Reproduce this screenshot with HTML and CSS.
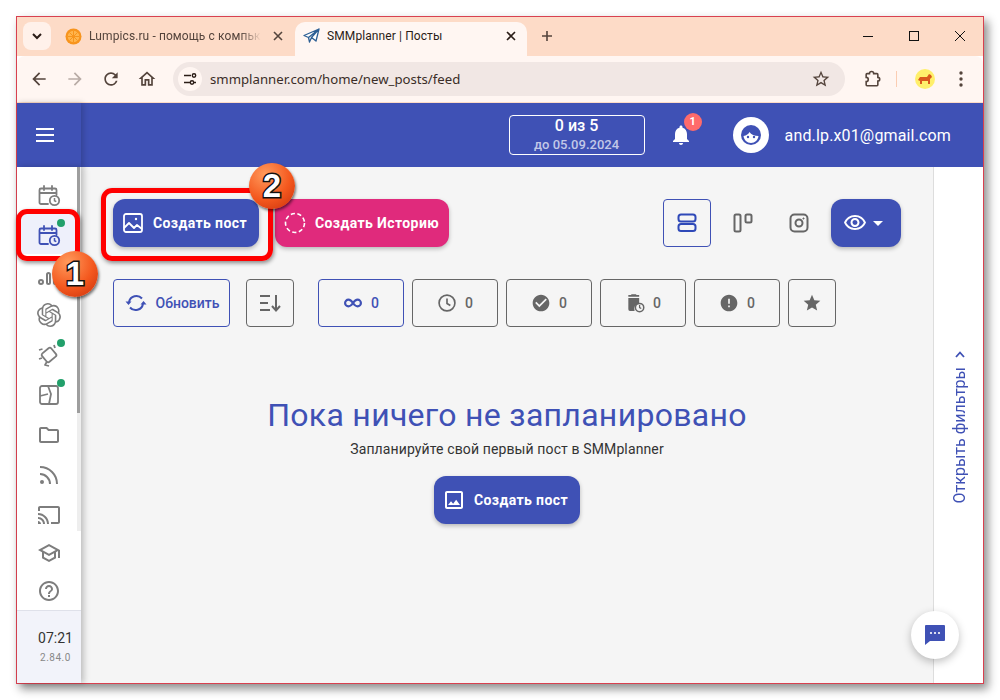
FILE: index.html
```html
<!DOCTYPE html>
<html lang="en">
<head>
    <meta charset="UTF-8">
    <title>SMMplanner | Посты</title>
    <link rel="stylesheet" href="styles.css">
</head>
<body>
<svg class="defs" width="0" height="0">
    <symbol id="cal-clock" viewBox="0 0 24 24">
        <path d="M4 5.5h14a1.5 1.5 0 0 1 1.5 1.5v5M11 21H4a1.5 1.5 0 0 1-1.5-1.5V7A1.5 1.5 0 0 1 4 5.500M2.500 10h17M7 3v4M15 3v4" fill="none" stroke="currentColor" stroke-width="1.8" stroke-linecap="round"/>
        <circle cx="17.500" cy="17.500" r="4.700" fill="none" stroke="currentColor" stroke-width="1.800"/>
        <path d="M17.500 15v2.700l1.800 1" fill="none" stroke="currentColor" stroke-width="1.500"/>
    </symbol>
    <symbol id="picture" viewBox="0 0 24 24">
        <path d="M19 5v14H5V5h14m0-2H5c-1.100 0-2 .9-2 2v14c0 1.100.9 2 2 2h14c1.100 0 2-.9 2-2V5c0-1.100-.9-2-2-2zm-4.860 8.860l-3 3.870L9 13.140 6 17h12l-3.860-5.140z"/>
    </symbol>
</svg>

<div class="window">
    <!-- browser chrome -->
    <div class="tabstrip">
        <button class="tab-search">
            <svg width="12" height="12" viewBox="0 0 12 12"><path d="M2 4l4 4 4-4" fill="none" stroke="#2b1d17" stroke-width="2"/></svg>
        </button>
        <div class="tab tab-idle">
            <svg class="favicon" width="17" height="17" viewBox="0 0 17 17">
                <circle cx="8.500" cy="8.500" r="8" fill="#f7941d"/>
                <circle cx="8.500" cy="8.500" r="5.800" fill="#ffb54d"/>
                <path d="M8.500 2.700v11.600M2.700 8.500h11.600M4.400 4.400l8.200 8.200M12.600 4.400l-8.200 8.200" stroke="#f7941d" stroke-width="1"/>
            </svg>
            <span class="tab-title fade">Lumpics.ru - помощь с компьк</span>
            <svg class="tab-close" width="10" height="10" viewBox="0 0 10 10"><path d="M1 1l8 8M9 1l-8 8" stroke="#54443c" stroke-width="1.600"/></svg>
        </div>
        <div class="tab tab-active">
            <svg class="favicon" width="17" height="17" viewBox="0 0 17 17">
                <path d="M16 1L1 7.500l4.500 2L16 1zM16 1l-3 12-4.500-3.500L16 1zM5.500 9.500l1 4.500 2-4.500" fill="#fff" stroke="#2c5f94" stroke-width="1.300" stroke-linejoin="round"/>
            </svg>
            <span class="tab-title">SMMplanner | Посты</span>
            <svg class="tab-close" width="10" height="10" viewBox="0 0 10 10"><path d="M1 1l8 8M9 1l-8 8" stroke="#2b1d17" stroke-width="1.600"/></svg>
        </div>
        <svg class="new-tab" width="12" height="12" viewBox="0 0 12 12"><path d="M6 1v10M1 6h10" stroke="#54443c" stroke-width="1.600"/></svg>
        <div class="win-controls">
            <svg width="12" height="12" viewBox="0 0 12 12"><path d="M1 6.500h10" stroke="#111" stroke-width="1"/></svg>
            <svg width="12" height="12" viewBox="0 0 12 12"><rect x="1.500" y="1.500" width="9" height="9" fill="none" stroke="#111" stroke-width="1"/></svg>
            <svg width="12" height="12" viewBox="0 0 12 12"><path d="M1 1l10 10M11 1L1 11" stroke="#111" stroke-width="1"/></svg>
        </div>
    </div>
    <div class="toolbar">
        <svg class="nav-icon" viewBox="0 0 24 24"><path d="M20 11H7.830l5.590-5.590L12 4l-8 8 8 8 1.410-1.410L7.830 13H20v-2z"/></svg>
        <svg class="nav-icon nav-off" viewBox="0 0 24 24"><path d="M12 4l-1.410 1.410L16.170 11H4v2h12.170l-5.580 5.590L12 20l8-8z"/></svg>
        <svg class="nav-icon" viewBox="0 0 24 24"><path d="M17.650 6.350A7.958 7.958 0 0 0 12 4c-4.420 0-7.990 3.580-7.990 8s3.570 8 7.990 8c3.730 0 6.840-2.550 7.730-6h-2.080A5.990 5.990 0 0 1 12 18c-3.310 0-6-2.690-6-6s2.690-6 6-6c1.660 0 3.140.69 4.220 1.780L13 11h7V4l-2.350 2.350z"/></svg>
        <svg class="nav-icon" viewBox="0 0 24 24"><path d="M12 5.690l5 4.500V18h-2v-6H9v6H7v-7.810l5-4.500M12 3L2 12h3v8h6v-6h2v6h6v-8h3L12 3z"/></svg>
        <div class="omnibox">
            <span class="site-info">
                <svg width="14" height="14" viewBox="0 0 14 14"><path d="M1 3.500h7M1 10.500h6M11 10.500h2" stroke="#2b1d17" stroke-width="1.400" fill="none"/><circle cx="11" cy="3.500" r="1.700" fill="none" stroke="#2b1d17" stroke-width="1.400"/><circle cx="9" cy="10.500" r="1.700" fill="none" stroke="#2b1d17" stroke-width="1.400"/></svg>
            </span>
            <span class="url">smmplanner.com/home/new_posts/feed</span>
            <svg class="nav-icon star" viewBox="0 0 24 24"><path d="M22 9.240l-7.190-.62L12 2 9.190 8.630 2 9.240l5.460 4.730L5.820 21 12 17.270 18.180 21l-1.630-7.030L22 9.240zM12 15.400l-3.760 2.270 1-4.280-3.320-2.880 4.380-.38L12 6.100l1.710 4.040 4.380.38-3.320 2.880 1 4.280L12 15.400z"/></svg>
        </div>
        <svg class="nav-icon ext" viewBox="0 0 24 24"><path d="M9 5.500a2.500 2.500 0 0 1 5 0H18a1 1 0 0 1 1 1V10a2.200 2.200 0 0 1 0 4.500V19a1 1 0 0 1-1 1H6a1 1 0 0 1-1-1V15a2.500 2.500 0 0 0 0-5V6.500a1 1 0 0 1 1-1z" fill="none" stroke="#54443c" stroke-width="1.900"/></svg>
        <span class="tool-sep"></span>
        <svg class="profile" width="20" height="20" viewBox="0 0 20 20">
            <circle cx="10" cy="10" r="10" fill="#ffef6b"/>
            <path d="M3 11l2-3h7l2-3 2 1 1 2-2 2v5h-2v-3H7v3H5v-3z" fill="#d9591c"/>
        </svg>
        <svg class="dots" width="4" height="16" viewBox="0 0 4 16"><circle cx="2" cy="2" r="1.700" fill="#54443c"/><circle cx="2" cy="8" r="1.700" fill="#54443c"/><circle cx="2" cy="14" r="1.700" fill="#54443c"/></svg>
    </div>

    <!-- app -->
    <header class="topbar">
        <div class="burger"><span></span><span></span><span></span></div>
        <div class="topbar-right">
            <div class="limit">
                <div class="limit-count">0 из 5</div>
                <div class="limit-date">до 05.09.2024</div>
            </div>
            <div class="bell">
                <svg width="24" height="24" viewBox="0 0 24 24" fill="#fff"><path d="M12 22c1.100 0 2-.9 2-2h-4c0 1.100.9 2 2 2zm6-6v-5c0-3.070-1.630-5.640-4.500-6.320V4c0-.83-.67-1.500-1.500-1.500s-1.500.67-1.500 1.500v.68C7.640 5.360 6 7.920 6 11v5l-2 2v1h16v-1l-2-2z"/></svg>
                <span class="bell-badge">1</span>
            </div>
            <svg class="avatar" width="36" height="36" viewBox="0 0 36 36">
                <circle cx="18" cy="18" r="18" fill="#fff"/>
                <circle cx="18" cy="18" r="10" fill="#3f51b5"/>
                <path d="M10.500 19c3-.5 5-2 6-4 1.500 2.500 5 4 9 4-.5 4-3.500 7-7.500 7s-7-3-7.500-7z" fill="#fff"/>
                <circle cx="15" cy="20" r="1.200" fill="#3f51b5"/>
                <circle cx="21" cy="20" r="1.200" fill="#3f51b5"/>
            </svg>
            <span class="email">and.lp.x01@gmail.com</span>
        </div>
    </header>

    <div class="app-body">
        <aside class="sidebar">
            <nav class="side-scroll">
                <a class="side-item"><svg class="side-icon"><use href="#cal-clock"/></svg></a>
                <a class="side-item side-active dot"><svg class="side-icon"><use href="#cal-clock"/></svg></a>
                <a class="side-item">
                    <svg class="side-icon" viewBox="0 0 24 24" fill="none" stroke="currentColor" stroke-width="2"><circle cx="4" cy="19" r="2"/><rect x="10" y="10" width="3" height="11" rx="1.500"/><rect x="17" y="4" width="3" height="17" rx="1.500"/></svg>
                </a>
                <a class="side-item">
                    <svg class="side-icon" viewBox="0 0 24 24" fill="currentColor"><path d="M22.282 9.821a5.985 5.985 0 0 0-.516-4.911 6.046 6.046 0 0 0-6.510-2.900A6.065 6.065 0 0 0 4.981 4.182a5.985 5.985 0 0 0-3.998 2.900 6.046 6.046 0 0 0 .743 7.097 5.980 5.980 0 0 0 .511 4.911 6.051 6.051 0 0 0 6.515 2.900A5.985 5.985 0 0 0 13.260 24a6.056 6.056 0 0 0 5.772-4.206 5.989 5.989 0 0 0 3.998-2.900 6.056 6.056 0 0 0-.748-7.073zm-9.022 12.608a4.476 4.476 0 0 1-2.876-1.041l.142-.080 4.778-2.758a.795.795 0 0 0 .393-.681v-6.737l2.020 1.169a.071.071 0 0 1 .038.052v5.583a4.504 4.504 0 0 1-4.495 4.494zm-9.661-4.125a4.471 4.471 0 0 1-.535-3.014l.142.085 4.783 2.758a.771.771 0 0 0 .781 0l5.843-3.369v2.333a.080.080 0 0 1-.033.061L9.740 19.950a4.499 4.499 0 0 1-6.141-1.646zM2.341 7.896a4.485 4.485 0 0 1 2.366-1.973V11.600a.766.766 0 0 0 .388.677l5.814 3.354-2.020 1.169a.076.076 0 0 1-.071 0l-4.830-2.787A4.504 4.504 0 0 1 2.341 7.872zm16.596 3.855L13.104 8.364 15.119 7.200a.076.076 0 0 1 .071 0l4.830 2.791a4.494 4.494 0 0 1-.676 8.105v-5.678a.790.790 0 0 0-.407-.667zm2.011-3.023l-.142-.085-4.774-2.782a.776.776 0 0 0-.785 0L9.409 9.230V6.897a.066.066 0 0 1 .028-.061l4.830-2.787a4.499 4.499 0 0 1 6.680 4.660zM8.307 12.863l-2.020-1.164a.080.080 0 0 1-.038-.057V6.074a4.499 4.499 0 0 1 7.376-3.454l-.142.081L8.704 5.459a.795.795 0 0 0-.393.681zm1.098-2.365l2.602-1.500 2.607 1.500v2.999l-2.597 1.500-2.607-1.500z"/></svg>
                </a>
                <a class="side-item dot">
                    <svg class="side-icon" viewBox="0 0 24 24" fill="none" stroke="currentColor" stroke-width="1.800" stroke-linejoin="round"><rect x="6" y="6.500" width="12" height="11" rx="2" transform="rotate(-40 12 12)"/><path d="M5.500 6L2 7M5 15l-3 1M10 18.500l-2 3.500 4 1M17 2l1 3"/></svg>
                </a>
                <a class="side-item dot">
                    <svg class="side-icon" viewBox="0 0 24 24" fill="none" stroke="currentColor" stroke-width="1.800"><rect x="3" y="3" width="18" height="18" rx="2"/><path d="M3 13l8-2M11 3l3 8-2 10"/></svg>
                </a>
                <a class="side-item">
                    <svg class="side-icon" viewBox="0 0 24 24" fill="currentColor"><path d="M9.170 6l2 2H20v10H4V6h5.170M10 4H4c-1.100 0-1.990.9-1.990 2L2 18c0 1.100.9 2 2 2h16c1.100 0 2-.9 2-2V8c0-1.100-.9-2-2-2h-8l-2-2z"/></svg>
                </a>
                <a class="side-item">
                    <svg class="side-icon" viewBox="0 0 24 24" fill="none" stroke="currentColor" stroke-width="2"><circle cx="5" cy="19" r="2" fill="currentColor" stroke="none"/><path d="M3 11c5.500 0 10 4.500 10 10M3 4c9.500 0 17 7.500 17 17"/></svg>
                </a>
                <a class="side-item">
                    <svg class="side-icon" viewBox="0 0 24 24" fill="currentColor"><path d="M21 3H3c-1.100 0-2 .9-2 2v3h2V5h18v14h-7v2h7c1.100 0 2-.9 2-2V5c0-1.100-.9-2-2-2zM1 18v3h3c0-1.660-1.340-3-3-3zm0-4v2c2.760 0 5 2.240 5 5h2c0-3.870-3.130-7-7-7zm0-4v2c4.970 0 9 4.030 9 9h2c0-6.080-4.930-11-11-11z"/></svg>
                </a>
                <a class="side-item side-short">
                    <svg class="side-icon" viewBox="0 0 24 24" fill="currentColor"><path d="M12 3L1 9l4 2.180v6L12 21l7-3.820v-6l2-1.090V17h2V9L12 3zm6.820 6L12 12.720 5.180 9 12 5.280 18.820 9zM17 15.990l-5 2.730-5-2.730v-3.720L12 15l5-2.730v3.720z"/></svg>
                </a>
                <a class="side-item">
                    <svg class="side-icon" viewBox="0 0 24 24" fill="currentColor"><path d="M11 18h2v-2h-2v2zm1-16C6.480 2 2 6.480 2 12s4.480 10 10 10 10-4.480 10-10S17.520 2 12 2zm0 18c-4.410 0-8-3.590-8-8s3.590-8 8-8 8 3.590 8 8-3.590 8-8 8zm0-14c-2.210 0-4 1.790-4 4h2c0-1.100.9-2 2-2s2 .9 2 2c0 2-3 1.750-3 5h2c0-2.250 3-2.500 3-5 0-2.210-1.790-4-4-4z"/></svg>
                </a>
            </nav>
            <div class="side-foot">
                <div class="clock">07:21</div>
                <div class="version">2.84.0</div>
            </div>
        </aside>

        <main class="content">
            <div class="actions">
                <button class="btn btn-primary">
                    <svg width="24" height="24" viewBox="0 0 24 24" fill="none" stroke="#fff" stroke-width="1.800" stroke-linejoin="round"><rect x="3" y="3" width="18" height="18" rx="2"/><path d="M3 17l5-5 5 5 3-3 5 4"/><circle cx="15" cy="8" r="1.200" fill="#fff" stroke="none"/></svg>
                    Создать пост
                </button>
                <button class="btn btn-pink">
                    <svg width="24" height="24" viewBox="0 0 24 24" fill="none" stroke="#fff" stroke-width="1.600"><circle cx="12" cy="12" r="9.500" stroke-dasharray="4.200 2.500"/></svg>
                    Создать Историю
                </button>
                <div class="views">
                    <button class="view view-active">
                        <svg width="24" height="24" viewBox="0 0 24 24" fill="none" stroke="#2f49b8" stroke-width="2"><rect x="3.500" y="3.500" width="17" height="7" rx="2.500"/><rect x="3.500" y="13" width="17" height="7" rx="2.500"/></svg>
                    </button>
                    <button class="view">
                        <svg width="24" height="24" viewBox="0 0 24 24" fill="none" stroke="#666" stroke-width="2"><rect x="3.500" y="3.500" width="6" height="17" rx="1.500"/><rect x="14.500" y="3.500" width="6" height="8" rx="1.500"/></svg>
                    </button>
                    <button class="view">
                        <svg width="24" height="24" viewBox="0 0 24 24" fill="none" stroke="#666" stroke-width="2"><rect x="3.500" y="3.500" width="17" height="17" rx="4"/><circle cx="12" cy="12" r="3.500"/><circle cx="16.500" cy="7.500" r=".6" fill="#666" stroke-width="1"/></svg>
                    </button>
                    <button class="btn btn-primary btn-eye">
                        <svg width="24" height="24" viewBox="0 0 24 24" fill="#fff"><path d="M12 6a9.770 9.770 0 0 1 8.820 5.500C19.170 14.870 15.790 17 12 17s-7.170-2.130-8.820-5.500A9.770 9.770 0 0 1 12 6m0-2C7 4 2.730 7.110 1 11.500 2.730 15.890 7 19 12 19s9.270-3.110 11-7.500C21.270 7.110 17 4 12 4zm0 5a2.500 2.500 0 0 1 0 5 2.500 2.500 0 0 1 0-5m0-2c-2.480 0-4.500 2.020-4.500 4.500S9.520 16 12 16s4.500-2.020 4.500-4.500S14.480 7 12 7z"/></svg>
                        <span class="caret"></span>
                    </button>
                </div>
            </div>

            <div class="filters-row">
                <button class="chip chip-blue chip-refresh">
                    <svg width="24" height="24" viewBox="0 0 24 24" fill="none" stroke="#3f51b5" stroke-width="2"><path d="M5 11a7.500 7.500 0 0 1 13-3.500M19 13a7.500 7.500 0 0 1-13 3.500"/><path d="M1.500 10.500h6l-3 3.500zM16.500 13.500h6l-3-3.500z" fill="#3f51b5" stroke="none"/></svg>
                    Обновить
                </button>
                <button class="chip chip-sort">
                    <svg width="24" height="24" viewBox="0 0 24 24" fill="none" stroke="#666" stroke-width="2"><path d="M2 5h10M2 12h8M2 19h10M18 4v15M14 15l4 4.500 4-4.500"/></svg>
                </button>
                <button class="chip chip-blue chip-count">
                    <svg width="20" height="20" viewBox="0 0 24 24" fill="none" stroke="#3f51b5" stroke-width="2.600"><path d="M12 12c-2-3-3.500-4-5.500-4a4 4 0 0 0 0 8c2 0 3.500-1 5.500-4s3.500-4 5.500-4a4 4 0 0 1 0 8c-2 0-3.500-1-5.500-4z"/></svg>
                    <span>0</span>
                </button>
                <button class="chip chip-count">
                    <svg width="20" height="20" viewBox="0 0 24 24" fill="none" stroke="#666" stroke-width="2"><circle cx="12" cy="12" r="9.500"/><path d="M12 6.500V12.500l4 2.500"/></svg>
                    <span>0</span>
                </button>
                <button class="chip chip-count">
                    <svg width="20" height="20" viewBox="0 0 24 24" fill="#666"><path d="M12 2C6.480 2 2 6.480 2 12s4.480 10 10 10 10-4.480 10-10S17.520 2 12 2zm-2 15l-5-5 1.410-1.410L10 14.170l7.590-7.590L19 8l-9 9z"/></svg>
                    <span>0</span>
                </button>
                <button class="chip chip-count">
                    <svg width="20" height="20" viewBox="0 0 24 24" fill="#666"><path d="M4 2.500h3l1-1h5l1 1h3v2H4zM4 6h13v6.500a6.500 6.500 0 0 0-5.500 9H6a2 2 0 0 1-2-2z"/><circle cx="17.500" cy="17.500" r="5" fill="none" stroke="#666" stroke-width="1.800"/><path d="M17.500 14.500v3l2 1.200" fill="none" stroke="#666" stroke-width="1.500"/></svg>
                    <span>0</span>
                </button>
                <button class="chip chip-count">
                    <svg width="20" height="20" viewBox="0 0 24 24" fill="#666"><path d="M12 2C6.480 2 2 6.480 2 12s4.480 10 10 10 10-4.480 10-10S17.520 2 12 2zm1 15h-2v-2h2v2zm0-4h-2V7h2v6z"/></svg>
                    <span>0</span>
                </button>
                <button class="chip chip-fav">
                    <svg width="20" height="20" viewBox="0 0 24 24" fill="#666"><path d="M12 17.270L18.180 21l-1.640-7.030L22 9.240l-7.190-.61L12 2 9.190 8.630 2 9.240l5.460 4.730L5.820 21z"/></svg>
                </button>
            </div>

            <section class="empty">
                <h1 class="empty-title">Пока ничего не запланировано</h1>
                <p class="empty-text">Запланируйте свой первый пост в SMMplanner</p>
                <button class="btn btn-primary">
                    <svg width="24" height="24" viewBox="0 0 24 24" fill="#fff"><use href="#picture"/></svg>
                    Создать пост
                </button>
            </section>
        </main>

        <aside class="filter-panel">
            <svg width="12" height="12" viewBox="0 0 12 12"><path d="M2 8l4-4.500L10 8" fill="none" stroke="#3f51b5" stroke-width="1.800"/></svg>
            <span class="filter-label">Открыть фильтры</span>
        </aside>
    </div>

    <!-- overlays -->
    <button class="chat-fab">
        <svg width="24" height="24" viewBox="0 0 24 24"><path d="M3 2h18a1 1 0 0 1 1 1v14a1 1 0 0 1-1 1H7l-5 4V3a1 1 0 0 1 1-1z" fill="#3f51b5"/><circle cx="8" cy="10" r="1.100" fill="#fff"/><circle cx="12" cy="10" r="1.100" fill="#fff"/><circle cx="16" cy="10" r="1.100" fill="#fff"/></svg>
    </button>
    <div class="mark mark-one"></div>
    <div class="mark mark-two"></div>
    <div class="step step-one">1</div>
    <div class="step step-two">2</div>
</div>
</body>
</html>
```

FILE: styles.css
```css
* {
    box-sizing: border-box;
}

body {
    margin: 0;
    padding: 16px;
    background: #fff;
    font-family: Roboto, "Liberation Sans", sans-serif;
    overflow: hidden;
}

.defs {
    position: absolute;
}

button {
    font-family: inherit;
    cursor: pointer;
}

/* Window */
.window {
    position: relative;
    width: 968px;
    height: 668px;
    border: 1px solid #d8404f;
    background: #fff;
    box-shadow: 4px 5px 9px rgba(0, 0, 0, 0.45);
}

/* Tab strip */
.tabstrip {
    height: 39px;
    display: flex;
    align-items: flex-start;
    background: #fddbc7;
    padding: 5px 0 0 6px;
}

.tab-search {
    width: 28px;
    height: 28px;
    border: none;
    border-radius: 8px;
    background: #fff1ea;
    display: flex;
    align-items: center;
    justify-content: center;
    padding: 0;
    flex: none;
}

.tab {
    display: flex;
    align-items: center;
    height: 34px;
    padding-bottom: 6px;
    font-size: 12px;
    letter-spacing: 0.1px;
    flex: none;
}

.tab-idle {
    width: 244px;
    padding-left: 14px;
    padding-right: 17px;
    color: #54443c;
}

.tab-active {
    width: 232px;
    padding-left: 8px;
    padding-right: 11px;
    background: #fff6f2;
    border-radius: 10px 10px 0 0;
    color: #2b1d17;
}

.favicon {
    flex: none;
    margin-right: 7px;
}

.tab-title {
    flex: 1;
    white-space: nowrap;
}

.fade {
    -webkit-mask-image: linear-gradient(to right, #000 88%, transparent);
    mask-image: linear-gradient(to right, #000 88%, transparent);
}

.tab-close {
    flex: none;
    margin-left: 12px;
}

.new-tab {
    margin: 8px 0 0 14px;
}

.win-controls {
    margin-left: auto;
    display: flex;
    gap: 34px;
    padding: 8px 17px 0 0;
}

/* Toolbar */
.toolbar {
    height: 47px;
    display: flex;
    align-items: center;
    background: #fff6f2;
    border-bottom: 1px solid #fddbc7;
    border-radius: 8px 8px 0 0;
    padding: 0 0 1px 12px;
}

.nav-icon {
    width: 20px;
    height: 20px;
    fill: #54443c;
    flex: none;
    margin-right: 16px;
}

.nav-off {
    fill: #b9aca6;
}

.omnibox {
    width: 672px;
    height: 34px;
    border-radius: 17px;
    background: #f1e7e4;
    display: flex;
    align-items: center;
    padding-left: 5px;
    flex: none;
}

.site-info {
    width: 24px;
    height: 24px;
    border-radius: 50%;
    background: #fff6f2;
    display: flex;
    align-items: center;
    justify-content: center;
}

.url {
    margin-left: 8px;
    font-family: "Noto Sans", sans-serif;
    font-size: 13.2px;
    color: #3a2d27;
}

.star {
    margin: 0 14px 0 auto;
}

.ext {
    margin: 0 0 0 17px;
}

.tool-sep {
    width: 1px;
    height: 16px;
    margin-left: 14px;
    background: #fbcdb3;
}

.profile {
    margin-left: 18px;
}

.dots {
    margin-left: 24px;
}

/* Top bar */
.topbar {
    height: 64px;
    display: flex;
    align-items: center;
    background: #3f51b5;
    color: #fff;
}

.burger {
    width: 64px;
    height: 64px;
    padding-right: 8px;
    display: flex;
    flex-direction: column;
    justify-content: center;
    align-items: center;
    gap: 4px;
    box-shadow: 2px 0 6px rgba(0, 0, 0, 0.2);
}

.burger span {
    width: 18px;
    height: 2px;
    background: #fff;
}

.topbar-right {
    margin-left: auto;
    display: flex;
    align-items: center;
    padding-right: 32px;
}

.limit {
    width: 136px;
    height: 40px;
    border: 1px solid #fff;
    border-radius: 4px;
    text-align: center;
}

.limit-count {
    font-size: 16px;
    font-weight: 500;
    line-height: 19px;
}

.limit-date {
    font-size: 13px;
    line-height: 19px;
    color: #c2c8e8;
    font-weight: 500;
}

.bell {
    position: relative;
    width: 24px;
    height: 24px;
    margin-left: 24px;
}

.bell-badge {
    position: absolute;
    top: -10px;
    left: 15px;
    width: 18px;
    height: 18px;
    border-radius: 50%;
    background: #ff6b6b;
    font-size: 11px;
    font-weight: 700;
    line-height: 18px;
    text-align: center;
}

.avatar {
    margin-left: 40px;
}

.email {
    margin-left: 16px;
    font-size: 16px;
    letter-spacing: 0.15px;
}

/* Body */
.app-body {
    height: 516px;
    display: flex;
    background: #f5f5f5;
}

.sidebar {
    width: 64px;
    flex: none;
    display: flex;
    flex-direction: column;
    background: #fff;
    box-shadow: 3px 0 6px rgba(0, 0, 0, 0.22);
    position: relative;
}

.side-scroll {
    flex: 1;
    padding-top: 7px;
    background: linear-gradient(#9e9e9e, #9e9e9e) right 1px top 0 / 3px 246px no-repeat,
                linear-gradient(#eee, #eee) right 0 top 0 / 4px 364px no-repeat;
}

.side-item {
    display: block;
    position: relative;
    height: 40px;
    width: 60px;
    padding-top: 9px;
    color: #7d7d7d;
}

.side-short {
    height: 38px;
    margin-top: -2px;
}

.side-icon {
    display: block;
    width: 24px;
    height: 24px;
    margin-left: 20px;
}

.side-active {
    color: #3f51b5;
    background: #eef0fb;
}

.dot::after {
    content: "";
    position: absolute;
    top: 5px;
    left: 40px;
    width: 8px;
    height: 8px;
    border-radius: 50%;
    background: #22a06b;
}

.side-foot {
    height: 73px;
    border-top: 1px solid #dfe1ea;
    background: #f2f3fa;
    text-align: center;
    padding: 19px 0 0 13px;
}

.clock {
    font-size: 14px;
    color: #333;
}

.version {
    margin-top: 6px;
    font-size: 10px;
    letter-spacing: 0.5px;
    color: #888;
}

/* Content */
.content {
    flex: 1;
    padding: 32px 32px 0;
}

.actions {
    display: flex;
    gap: 16px;
}

.btn {
    height: 48px;
    display: inline-flex;
    align-items: center;
    gap: 8px;
    padding: 0 12px 0 8px;
    border: none;
    border-radius: 12px;
    color: #fff;
    font-size: 14px;
    font-weight: 700;
    letter-spacing: 0.4px;
    box-shadow: 0 2px 4px rgba(0, 0, 0, 0.25);
}

.btn-primary {
    background: #3f51b5;
}

.btn-pink {
    background: #e02a7c;
    padding-right: 10px;
}

.views {
    margin-left: auto;
    display: flex;
    gap: 8px;
}

.view {
    width: 48px;
    height: 48px;
    padding: 0;
    display: flex;
    align-items: center;
    justify-content: center;
    border: 1px solid transparent;
    border-radius: 4px;
    background: none;
}

.view-active {
    border-color: #3f51b5;
}

.btn-eye {
    width: 70px;
    padding: 0 0 0 12px;
    gap: 6px;
}

.caret {
    width: 0;
    height: 0;
    border-left: 5px solid transparent;
    border-right: 5px solid transparent;
    border-top: 5px solid #fff;
}

.filters-row {
    display: flex;
    gap: 8px;
    margin-top: 32px;
}

.chip {
    height: 48px;
    display: flex;
    align-items: center;
    justify-content: center;
    padding: 0;
    border: 1px solid #666;
    border-radius: 4px;
    background: none;
    color: #666;
    font-size: 14px;
    font-weight: 500;
}

.chip-blue {
    border-color: #3f51b5;
    color: #3f51b5;
}

.chip-refresh {
    width: 117px;
    gap: 8px;
    margin-right: 8px;
}

.chip-sort {
    width: 48px;
    margin-right: 16px;
}

.chip-count {
    width: 86px;
    gap: 8px;
}

.chip-fav {
    width: 48px;
}

.empty {
    display: flex;
    flex-direction: column;
    align-items: center;
    margin-top: 69px;
}

.empty-title {
    margin: 0;
    font-size: 32px;
    font-weight: 400;
    line-height: 38px;
    letter-spacing: 0.3px;
    color: #3f51b5;
}

.empty-text {
    margin: 5px 0 17px;
    font-size: 14px;
    line-height: 20px;
    letter-spacing: 0.12px;
    color: #333;
}

/* Filter panel */
.filter-panel {
    width: 50px;
    flex: none;
    background: #fff;
    border-left: 1px solid #ddd;
    display: flex;
    flex-direction: column;
    align-items: center;
    gap: 6px;
    padding: 182px 0 0 2px;
}

.filter-label {
    writing-mode: vertical-rl;
    transform: rotate(180deg);
    font-size: 16px;
    color: #3f51b5;
}

/* Overlays */
.chat-fab {
    position: absolute;
    left: 894px;
    top: 594px;
    width: 48px;
    height: 48px;
    border: none;
    border-radius: 50%;
    background: #fff;
    box-shadow: 0 3px 8px rgba(0, 0, 0, 0.25);
    padding: 3px 0 0;
}

.mark {
    position: absolute;
    border: 5px solid #f00;
    border-radius: 11px;
    box-shadow: 1px 2px 4px rgba(0, 0, 0, 0.45);
}

.mark-one {
    left: -1px;
    top: 192px;
    width: 64px;
    height: 52px;
}

.mark-two {
    left: 84px;
    top: 171px;
    width: 172px;
    height: 73px;
}

.step {
    position: absolute;
    width: 46px;
    height: 46px;
    border-radius: 50%;
    background: radial-gradient(circle at 35% 25%, #ff9a5c, #f4581e 55%, #c8300c);
    box-shadow: 1px 2px 3px rgba(0, 0, 0, 0.55);
    color: #fff;
    font-family: "Liberation Sans", sans-serif;
    font-size: 33px;
    font-weight: 700;
    line-height: 46px;
    text-align: center;
    -webkit-text-stroke: 3px #111;
    paint-order: stroke fill;
}

.step-one {
    left: 35px;
    top: 234px;
}

.step-two {
    left: 232px;
    top: 146px;
}
```
